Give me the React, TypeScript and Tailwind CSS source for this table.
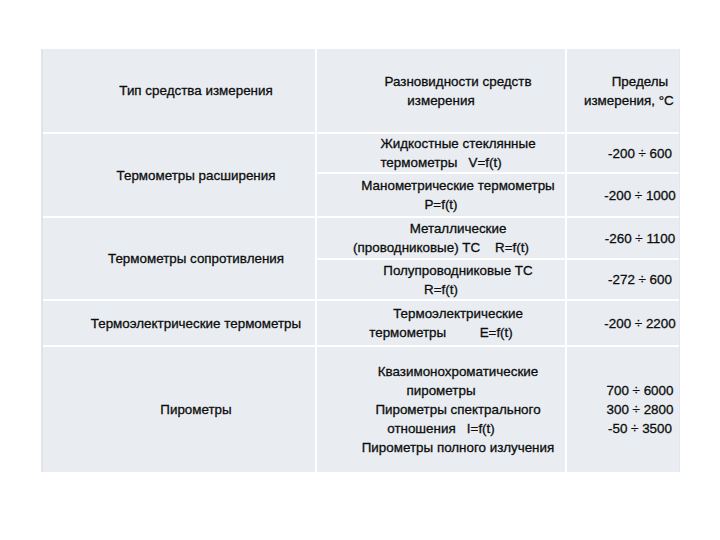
import React from "react";

type LineProps = { text: string; shift?: boolean };

// Lines in the source table sit 17px right of the cell centre unless noted
function Line({ text, shift = true }: LineProps) {
  return (
    <div className={shift ? "whitespace-pre text-center" : "whitespace-pre text-center -translate-x-[17px]"}>
      {text}
    </div>
  );
}

function Cell({ children, className = "" }: { children: React.ReactNode; className?: string }) {
  return (
    <div className={`bg-[#e9edf2] flex flex-col justify-center pl-[34px] leading-[19px] ${className}`}>
      {children}
    </div>
  );
}

export default function App() {
  return (
    <div
      className="w-[720px] h-[540px] bg-white pt-[49px] pl-[41px] text-[13.4px] text-[#0d0d0d] [-webkit-text-stroke:0.3px_#0d0d0d]"
      style={{ fontFamily: '"Liberation Sans", Arial, sans-serif' }}
    >
      <div className="inline-grid grid-cols-[272px_248px_112px] grid-rows-[83px_38px_42px_40px_39px_44px_125px] gap-[2px] bg-white border-l-2 border-[#e2e3e5] border-r border-r-[#e4e4f4]">
        {/* header */}
        <Cell>
          <Line text="Тип средства измерения" />
        </Cell>
        <Cell>
          <Line text="Разновидности средств" />
          <Line text="измерения" shift={false} />
        </Cell>
        <Cell>
          <Line text="Пределы" />
          <Line text="измерения, °C" shift={false} />
        </Cell>

        {/* expansion thermometers */}
        <Cell className="row-span-2">
          <Line text="Термометры расширения" />
        </Cell>
        <Cell className="leading-[18px]">
          <Line text="Жидкостные стеклянные" />
          <Line text="термометры   V=f(t)" shift={false} />
        </Cell>
        <Cell>
          <Line text="-200 ÷ 600" />
        </Cell>
        <Cell>
          <Line text="Манометрические термометры" />
          <Line text="P=f(t)" shift={false} />
        </Cell>
        <Cell>
          <Line text="-200 ÷ 1000" />
        </Cell>

        {/* resistance thermometers */}
        <Cell className="row-span-2">
          <Line text="Термометры сопротивления" />
        </Cell>
        <Cell className="leading-[18px]">
          <Line text="Металлические" />
          <Line text="(проводниковые) ТС    R=f(t)" shift={false} />
        </Cell>
        <Cell>
          <Line text="-260 ÷ 1100" />
        </Cell>
        <Cell>
          <Line text="Полупроводниковые ТС" />
          <Line text="R=f(t)" shift={false} />
        </Cell>
        <Cell>
          <Line text="-272 ÷ 600" />
        </Cell>

        {/* thermoelectric */}
        <Cell>
          <Line text="Термоэлектрические термометры" />
        </Cell>
        <Cell>
          <Line text="Термоэлектрические" />
          <Line text="термометры         E=f(t)" shift={false} />
        </Cell>
        <Cell>
          <Line text="-200 ÷ 2200" />
        </Cell>

        {/* pyrometers */}
        <Cell>
          <Line text="Пирометры" />
        </Cell>
        <Cell className="leading-[19.3px]">
          <Line text="Квазимонохроматические" />
          <Line text="пирометры" shift={false} />
          <Line text="Пирометры спектрального" />
          <Line text="отношения   I=f(t)" shift={false} />
          <Line text="Пирометры полного излучения" />
        </Cell>
        <Cell className="leading-[19.3px]">
          <Line text="700 ÷ 6000" />
          <Line text="300 ÷ 2800" />
          <Line text="-50 ÷ 3500" />
        </Cell>
      </div>
    </div>
  );
}
